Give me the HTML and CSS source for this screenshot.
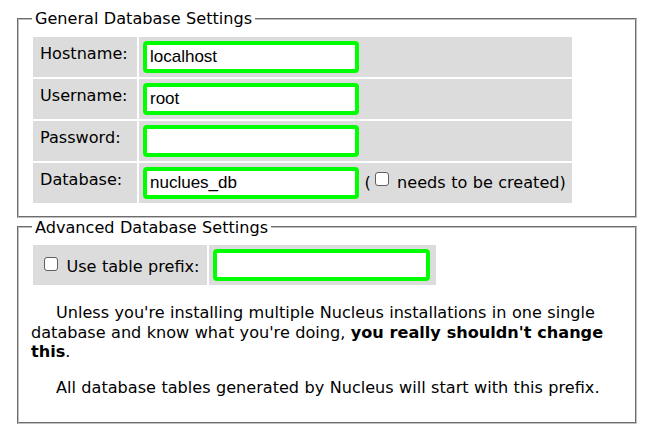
FILE: index.html
```html
<!DOCTYPE html>
<html>
<head>
<meta charset="utf-8">
<link rel="stylesheet" href="styles.css">
</head>
<body>
<fieldset class="group group-general">
  <legend>General Database Settings</legend>
  <table class="form">
    <tr>
      <td class="label">Hostname:</td>
      <td class="field"><input class="text" type="text" value="localhost"></td>
    </tr>
    <tr>
      <td class="label">Username:</td>
      <td class="field"><input class="text" type="text" value="root"></td>
    </tr>
    <tr>
      <td class="label">Password:</td>
      <td class="field"><input class="text" type="password" value=""></td>
    </tr>
    <tr>
      <td class="label">Database:</td>
      <td class="field"><input class="text" type="text" value="nuclues_db"> (<input class="check" type="checkbox"> needs to be created)</td>
    </tr>
  </table>
</fieldset>
<fieldset class="group group-advanced">
  <legend>Advanced Database Settings</legend>
  <table class="form">
    <tr>
      <td class="label label-mid"><input class="check" type="checkbox"> Use table prefix:</td>
      <td class="field"><input class="text text-prefix" type="text" value=""></td>
    </tr>
  </table>
  <p class="note">Unless you're installing multiple Nucleus installations in one single database and know what you're doing, <strong>you really shouldn't change this</strong>.</p>
  <p class="note">All database tables generated by Nucleus will start with this prefix.</p>
</fieldset>
</body>
</html>
```
FILE: styles.css
```css
html {
  background: #ffffff;
}
body {
  margin: 9px 8px 8px 8px;
  font-family: "DejaVu Sans", Verdana, sans-serif;
  font-size: 16.1px;
  word-spacing: 0.3px;
  line-height: 19.5px;
  color: #000000;
}
.group {
  margin: 0 8px 0 9px;
  padding: 6px 12px 10px 12px;
  border: 2px groove #c0c0c0;
}
.group-general {
  padding-bottom: 11px;
}
.group-advanced {
  padding-bottom: 9px;
}
.group legend {
  padding: 0 3px;
  margin-left: 1px;
}
.form {
  border-collapse: separate;
  border-spacing: 2px;
}
.form td {
  background: #dcdcdc;
  vertical-align: top;
}
.label {
  padding: 7px 7px 0 7px;
  width: 90px;
  white-space: nowrap;
}
.label-mid {
  vertical-align: middle !important;
  width: auto;
  padding: 0 7px 0 7px;
}
.field {
  padding: 4px 6px 4px 4px;
  white-space: nowrap;
}
.text {
  box-sizing: border-box;
  width: 216px;
  height: 32px;
  margin: 0;
  padding: 1px 3px;
  border: 4px solid #00ff00;
  border-radius: 4px;
  font-family: "Liberation Sans", Arial, sans-serif;
  font-size: 17px;
  word-spacing: 0;
  color: #000000;
  background: #ffffff;
  vertical-align: middle;
  outline: none;
}
.text-prefix {
  width: 217px;
}
.check {
  -webkit-appearance: none;
  appearance: none;
  box-sizing: border-box;
  width: 14px;
  height: 14px;
  margin: 3px 3px 3px 4px;
  border: 1px solid #5f5f5f;
  border-radius: 3px;
  background: #ffffff;
  vertical-align: -2px;
}
.note {
  margin: 16px 0;
  text-indent: 25px;
}
```
